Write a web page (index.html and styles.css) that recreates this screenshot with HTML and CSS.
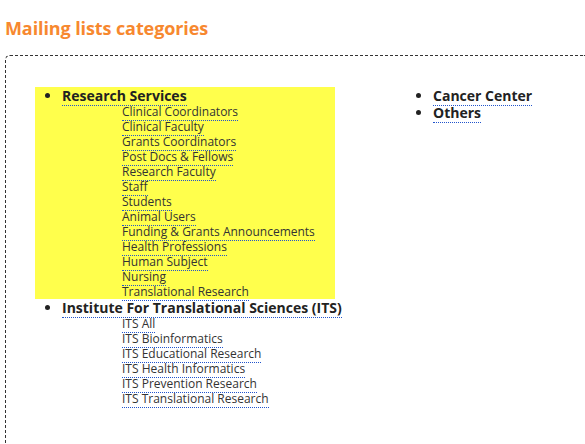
FILE: index.html
```html
<!DOCTYPE html>
<html>
<head>
<meta charset="utf-8">
<link rel="stylesheet" href="styles.css">
</head>
<body>
<h2 class="title">Mailing lists categories</h2>
<div class="panel">
  <div class="col col-left">
    <div class="highlight">
      <ul class="cats">
        <li><a class="cat" href="#">Research Services</a>
          <ul class="subs">
            <li><a href="#">Clinical Coordinators</a></li>
            <li><a href="#">Clinical Faculty</a></li>
            <li><a href="#">Grants Coordinators</a></li>
            <li><a href="#">Post Docs &amp; Fellows</a></li>
            <li><a href="#">Research Faculty</a></li>
            <li><a href="#">Staff</a></li>
            <li><a href="#">Students</a></li>
            <li><a href="#">Animal Users</a></li>
            <li><a href="#">Funding &amp; Grants Announcements</a></li>
            <li><a href="#">Health Professions</a></li>
            <li><a href="#">Human Subject</a></li>
            <li><a href="#">Nursing</a></li>
            <li><a href="#">Translational Research</a></li>
          </ul>
        </li>
      </ul>
    </div>
    <ul class="cats">
      <li><a class="cat" href="#">Institute For Translational Sciences (ITS)</a>
        <ul class="subs">
          <li><a href="#">ITS All</a></li>
          <li><a href="#">ITS Bioinformatics</a></li>
          <li><a href="#">ITS Educational Research</a></li>
          <li><a href="#">ITS Health Informatics</a></li>
          <li><a href="#">ITS Prevention Research</a></li>
          <li><a href="#">ITS Translational Research</a></li>
        </ul>
      </li>
    </ul>
  </div>
  <div class="col col-right">
    <ul class="cats">
      <li><a class="cat" href="#">Cancer Center</a></li>
      <li><a class="cat" href="#">Others</a></li>
    </ul>
  </div>
</div>
</body>
</html>
```
FILE: styles.css
```css
html, body {
  margin: 0;
  padding: 0;
  background: #fff;
  overflow: hidden;
}
body {
  font-family: "Open Sans", "DejaVu Sans", sans-serif;
  color: #222;
  padding: 0 0 0 5px;
}
.title {
  margin: 0;
  padding-top: 16px;
  height: 55px;
  box-sizing: border-box;
  font-size: 18px;
  line-height: 24px;
  font-weight: bold;
  color: #f7882f;
  letter-spacing: -0.1px;
}
.panel {
  display: flex;
  height: 389px;
  border: 1px dashed #333;
  border-right: 0;
  border-bottom: 0;
  border-radius: 5px 0 0 0;
  padding: 31px 0 0 29px;
  box-sizing: border-box;
}
.col-left {
  width: 300px;
}
.col-right {
  margin-left: 71px;
}
.highlight {
  background: #ffff4c;
}
.cats {
  margin: 0;
  padding: 0 0 0 27px;
}
.cats > li {
  font-size: 14px;
  line-height: 17px;
  font-weight: bold;
  white-space: nowrap;
}
.subs {
  margin: 0;
  padding: 0 0 0 60px;
  list-style: none;
}
.subs > li {
  font-size: 12px;
  line-height: 15px;
  font-weight: normal;
}
a {
  color: #222;
  text-decoration: none;
  border-bottom: 1px dotted #2255cc;
}
.subs a {
  color: #333;
}
```
